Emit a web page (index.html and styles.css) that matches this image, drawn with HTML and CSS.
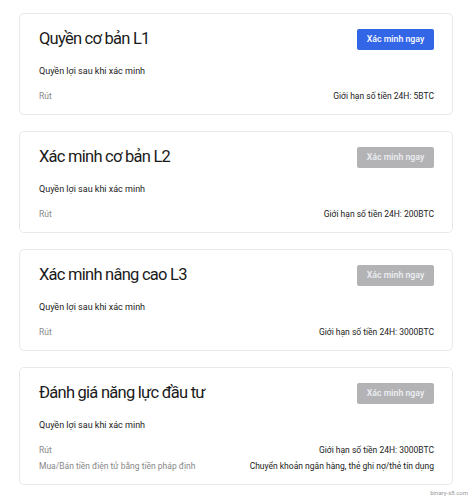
FILE: index.html
```html
<!DOCTYPE html>
<html lang="vi">
<head>
<meta charset="utf-8">
<title>Xác minh</title>
<link rel="stylesheet" href="styles.css">
</head>
<body>
<div class="list">
  <section class="card">
    <div class="head">
      <h2 class="title">Quyền cơ bản L1</h2>
      <button class="btn btn-primary">Xác minh ngay</button>
    </div>
    <p class="sub">Quyền lợi sau khi xác minh</p>
    <div class="row"><span class="label">Rút</span><span class="value">Giới hạn số tiền 24H: 5BTC</span></div>
  </section>
  <section class="card">
    <div class="head">
      <h2 class="title">Xác minh cơ bản L2</h2>
      <button class="btn btn-disabled">Xác minh ngay</button>
    </div>
    <p class="sub">Quyền lợi sau khi xác minh</p>
    <div class="row"><span class="label">Rút</span><span class="value">Giới hạn số tiền 24H: 200BTC</span></div>
  </section>
  <section class="card">
    <div class="head">
      <h2 class="title">Xác minh nâng cao L3</h2>
      <button class="btn btn-disabled">Xác minh ngay</button>
    </div>
    <p class="sub">Quyền lợi sau khi xác minh</p>
    <div class="row"><span class="label">Rút</span><span class="value">Giới hạn số tiền 24H: 3000BTC</span></div>
  </section>
  <section class="card">
    <div class="head">
      <h2 class="title">Đánh giá năng lực đầu tư</h2>
      <button class="btn btn-disabled">Xác minh ngay</button>
    </div>
    <p class="sub">Quyền lợi sau khi xác minh</p>
    <div class="row"><span class="label">Rút</span><span class="value">Giới hạn số tiền 24H: 3000BTC</span></div>
    <div class="row"><span class="label">Mua/Bán tiền điện tử bằng tiền pháp định</span><span class="value">Chuyển khoản ngân hàng, thẻ ghi nợ/thẻ tín dụng</span></div>
  </section>
</div>
<div class="mark">binary-x8.com</div>
</body>
</html>
```
FILE: styles.css
```css
* { box-sizing: border-box; }
html, body { margin: 0; background: #fff; }
body {
  padding: 13px 19px 0;
  font-family: Roboto, "Noto Sans", "Liberation Sans", sans-serif;
  color: #222;
}
.list { display: flex; flex-direction: column; gap: 16px; }
.card {
  border: 1px solid #e9e9e9;
  border-radius: 5px;
  padding: 14px 18px 10px 19px;
  background: #fff;
}
.head {
  display: flex;
  align-items: center;
  justify-content: space-between;
  height: 22px;
}
.title {
  margin: 0;
  font-size: 16.5px;
  letter-spacing: -0.75px;
  font-weight: 400;
  color: #1a1a1a;
  line-height: 22px;
}
.btn {
  font-family: inherit;
  font-size: 8.75px;
  font-weight: 500;
  border: none;
  border-radius: 2px;
  width: 77px;
  height: 21px;
  padding: 0;
  color: #fff;
}
.btn-primary { background: #3366e6; }
.btn-disabled { background: #b3b3b6; color: #eef0f3; }
.sub {
  margin: 14px 0 10px;
  font-size: 9px;
  line-height: 14px;
  color: #222;
}
.row {
  display: flex;
  justify-content: space-between;
  font-size: 8.5px;
  line-height: 16px;
}
.label { color: #888; }
.value { color: #222; }
.mark {
  text-align: right;
  font-size: 6px;
  line-height: 8px;
  color: #999;
  margin-top: 4px;
  margin-right: -15px;
}
```
